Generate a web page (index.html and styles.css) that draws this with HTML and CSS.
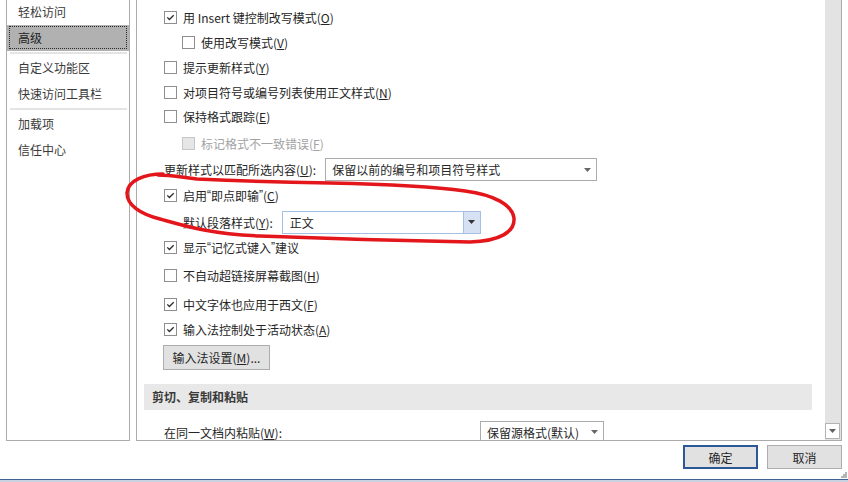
FILE: index.html
```html
<!DOCTYPE html>
<html lang="zh-CN">
<head>
<meta charset="utf-8">
<title>Word 选项 - 高级</title>
<link rel="stylesheet" href="styles.css">
</head>
<body>
<div class="window">
  <div class="main">
    <nav class="nav">
      <div class="nav-item first">轻松访问</div>
      <div class="nav-item selected">高级</div>
      <div class="nav-sep"></div>
      <div class="nav-item">自定义功能区</div>
      <div class="nav-item">快速访问工具栏</div>
      <div class="nav-sep"></div>
      <div class="nav-item">加载项</div>
      <div class="nav-item">信任中心</div>
    </nav>
    <div class="panel">
      <div class="content">
        <div class="row"><span class="cb"><svg class="tick" width="9" height="9" viewBox="0 0 9 9"><path d="M1.3 4.4 L3.4 6.5 L7.7 2.2"/></svg></span>用 Insert 键控制改写模式(<u>O</u>)</div>
        <div class="row indent"><span class="cb"></span>使用改写模式(<u>V</u>)</div>
        <div class="row"><span class="cb"></span>提示更新样式(<u>Y</u>)</div>
        <div class="row h24"><span class="cb"></span>对项目符号或编号列表使用正文样式(<u>N</u>)</div>
        <div class="row"><span class="cb"></span>保持格式跟踪(<u>E</u>)</div>
        <div class="row indent disabled mt1 h26"><span class="cb"></span>标记格式不一致错误(<u>F</u>)</div>
        <div class="row h27">更新样式以匹配所选内容(<u>U</u>):<div class="select sel-wide"><span class="sel-text">保留以前的编号和项目符号样式</span><span class="sel-arrow"><svg width="7" height="4" viewBox="0 0 7 4"><path d="M0 0 H7 L3.5 4 Z" fill="#666"/></svg></span></div></div>
        <div class="row h24"><span class="cb"><svg class="tick" width="9" height="9" viewBox="0 0 9 9"><path d="M1.3 4.4 L3.4 6.5 L7.7 2.2"/></svg></span>启用<span class="q">“</span>即点即输<span class="q">”</span>(<u>C</u>)</div>
        <div class="row indent-label mt1 h28">默认段落样式(<u>Y</u>):<div class="select sel-focus"><span class="sel-text">正文</span><span class="sel-btn"><svg width="7" height="4" viewBox="0 0 7 4"><path d="M0 0 H7 L3.5 4 Z" fill="#333"/></svg></span></div></div>
        <div class="row h22"><span class="cb"><svg class="tick" width="9" height="9" viewBox="0 0 9 9"><path d="M1.3 4.4 L3.4 6.5 L7.7 2.2"/></svg></span>显示<span class="q">“</span>记忆式键入<span class="q">”</span>建议</div>
        <div class="row mt3 h28"><span class="cb"></span>不自动超链接屏幕截图(<u>H</u>)</div>
        <div class="row h30"><span class="cb"><svg class="tick" width="9" height="9" viewBox="0 0 9 9"><path d="M1.3 4.4 L3.4 6.5 L7.7 2.2"/></svg></span>中文字体也应用于西文(<u>F</u>)</div>
        <div class="row h20"><span class="cb"><svg class="tick" width="9" height="9" viewBox="0 0 9 9"><path d="M1.3 4.4 L3.4 6.5 L7.7 2.2"/></svg></span>输入法控制处于活动状态(<u>A</u>)</div>
        <button class="btn ime-btn">输入法设置(<u>M</u>)...</button>
        <div class="section">剪切、复制和粘贴</div>
        <div class="row paste-row"><span class="paste-label">在同一文档内粘贴(<u>W</u>):</span><div class="select sel-small"><span class="sel-text">保留源格式(默认)</span><span class="sel-arrow"><svg width="7" height="4" viewBox="0 0 7 4"><path d="M0 0 H7 L3.5 4 Z" fill="#666"/></svg></span></div></div>
      </div>
      <div class="scrollbar">
        <div class="sb-down"><svg width="7" height="4" viewBox="0 0 7 4"><path d="M0 0 H7 L3.5 4 Z" fill="#606060"/></svg></div>
      </div>
    </div>
  </div>
  <div class="footer">
    <button class="btn dlg-btn default">确定</button>
    <button class="btn dlg-btn">取消</button>
  </div>
  <div class="edge"></div>
  <svg class="grip" width="7" height="7" viewBox="0 0 7 7">
    <rect x="5" y="1" width="2" height="2" fill="#b5b5b5"/>
    <rect x="3" y="3" width="2" height="2" fill="#b5b5b5"/>
    <rect x="5" y="3" width="2" height="2" fill="#b5b5b5"/>
    <rect x="1" y="5" width="2" height="2" fill="#b5b5b5"/>
    <rect x="3" y="5" width="2" height="2" fill="#b5b5b5"/>
    <rect x="5" y="5" width="2" height="2" fill="#b5b5b5"/>
  </svg>
  <svg class="annot" width="848" height="482" viewBox="0 0 848 482">
    <path d="M163 174 C145 174 128 180 127 193 C127 205 140 214 160 219 C185 226 210 234 260 236 C340 239 420 241 470 242 C500 241 515 232 514 218 C512 205 495 195 465 191 C430 186 380 184 330 183 C270 182 220 180 197 179 C180 177 170 175 158 175"/>
  </svg>
</div>
</body>
</html>
```

FILE: styles.css
```css
* { box-sizing: border-box; }

body {
  margin: 0;
  width: 848px;
  height: 482px;
  overflow: hidden;
  background: #ffffff;
  font-family: "Noto Sans CJK SC", "Microsoft YaHei", sans-serif;
  font-size: 12px;
  color: #262626;
}

u { text-decoration: underline; text-underline-offset: 1px; }

.q { font-family: "Liberation Sans", Arial, sans-serif; }

.window {
  position: relative;
  width: 848px;
  height: 482px;
  display: flex;
  flex-direction: column;
}

.main {
  display: flex;
  gap: 6px;
  height: 441px;
  padding: 0 6px;
}

/* left navigation */
.nav {
  width: 124px;
  flex: none;
  border: 1px solid #ababab;
  border-top: none;
}

.nav-item {
  position: relative;
  height: 26px;
  line-height: 26px;
  padding-left: 11px;
  color: #3a3a3a;
  white-space: nowrap;
}

.nav-item.first { height: 25px; line-height: 24px; }

.nav-item.selected { background: #b1b1b1; color: #222; }

.nav-item.selected::after {
  content: "";
  position: absolute;
  top: 1px;
  left: 2px;
  right: 2px;
  bottom: 2px;
  border: 1px dotted #2a2a2a;
}

.nav-sep {
  height: 2px;
  margin: 1px 2px 1px 3px;
  background: #e4e4e4;
}

/* main panel */
.panel {
  flex: 1;
  display: flex;
  border: 1px solid #ababab;
  border-top: none;
}

.content {
  flex: 1;
  overflow: hidden;
  padding: 5px 0 0 27px;
}

.row {
  display: flex;
  align-items: center;
  height: 25px;
  white-space: nowrap;
}

.h20 { height: 20px; }
.h22 { height: 22px; }
.h24 { height: 24px; }
.h26 { height: 26px; }
.h27 { height: 27px; }
.h28 { height: 28px; }
.h30 { height: 30px; }
.mt1 { margin-top: 1px; }
.mt3 { margin-top: 3px; }

.indent { padding-left: 18px; }
.indent-label { padding-left: 19px; }

.cb {
  flex: none;
  width: 13px;
  height: 13px;
  margin-right: 6px;
  border: 1px solid #8e8e8e;
  background: #fff;
  display: flex;
  align-items: center;
  justify-content: center;
}

.tick path {
  fill: none;
  stroke: #2b2b2b;
  stroke-width: 1.3;
}

.disabled { color: #a3a3a3; }
.disabled .cb { background: #e6e6e6; border-color: #c6c6c6; }

.select {
  display: flex;
  align-items: center;
  height: 23px;
  border: 1px solid #ababab;
  background: #fff;
  padding-left: 6px;
  color: #262626;
}

.sel-text { flex: 1; }

.sel-arrow {
  width: 18px;
  display: flex;
  justify-content: center;
}

.sel-wide { width: 272px; margin-left: 9px; }

.sel-focus {
  width: 199px;
  margin-left: 9px;
  border-color: #a6c0e3;
  padding-left: 7px;
}

.sel-btn {
  width: 17px;
  align-self: stretch;
  background: #d6e2f3;
  border-left: 1px solid #a6c0e3;
  display: flex;
  align-items: center;
  justify-content: center;
}

.btn {
  font-family: "Noto Sans CJK SC", "Microsoft YaHei", sans-serif;
  font-size: 12px;
  color: #262626;
  background: #e1e1e1;
  border: 1px solid #adadad;
  padding: 0;
  margin: 0;
}

.ime-btn {
  display: block;
  margin-top: 6px;
  width: 107px;
  height: 25px;
  margin-left: -1px;
}

.section {
  margin: 14px 13px 0 -20px;
  height: 26px;
  line-height: 26px;
  padding-left: 8px;
  background: #e8e8e8;
  font-weight: 700;
  color: #3a3a3a;
}

.paste-row { margin-top: 10px; height: 24px; }

.paste-label { width: 316px; flex: none; }

.sel-small {
  width: 124px;
  height: 22px;
  padding-left: 6px;
}

.scrollbar {
  width: 16px;
  flex: none;
  background: #e3e3e3;
  display: flex;
  flex-direction: column;
  justify-content: flex-end;
}

.sb-down {
  width: 15px;
  height: 16px;
  margin-bottom: 1px;
  border: 1px solid #b3b3b3;
  background: #fff;
  display: flex;
  align-items: center;
  justify-content: center;
}

/* footer */
.footer {
  height: 38px;
  display: flex;
  justify-content: flex-end;
  gap: 9px;
  padding: 4px 6px 0 0;
}

.dlg-btn { width: 75px; height: 24px; }

.dlg-btn.default { border: 2px solid #2c5898; }

.edge {
  height: 3px;
  border-top: 1px solid #3f6193;
  background: #c8d2e0;
}

.grip {
  position: absolute;
  right: 1px;
  bottom: 4px;
}

.annot {
  position: absolute;
  left: 0;
  top: 0;
  pointer-events: none;
}

.annot path {
  fill: none;
  stroke: #e3161b;
  stroke-width: 3.5;
  stroke-linecap: round;
  stroke-linejoin: round;
}
```
